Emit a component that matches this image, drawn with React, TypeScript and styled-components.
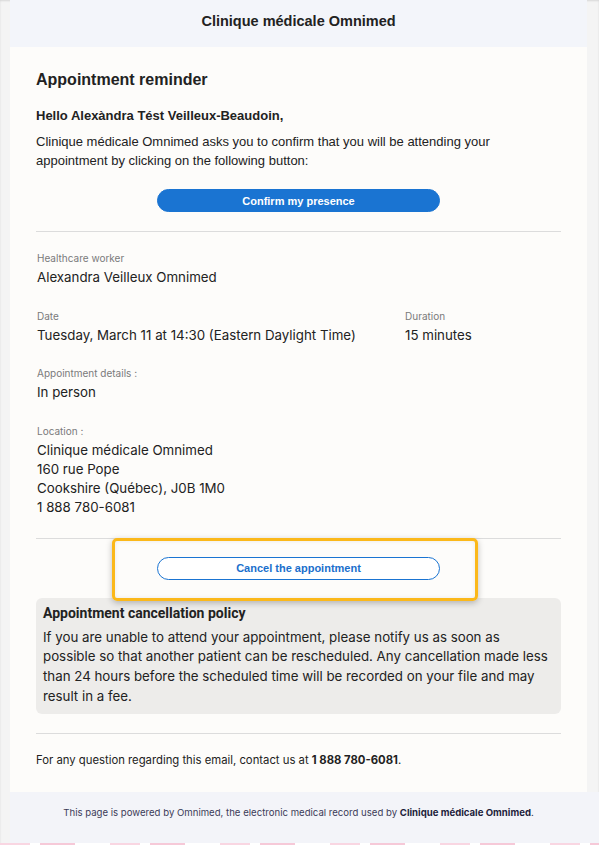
import React from "react";
import styled, { createGlobalStyle } from "styled-components";

const Global = createGlobalStyle`
  html, body { margin: 0; padding: 0; background: #f4f4f4; }
  body { font-family: "Liberation Sans", Arial, sans-serif; color: #222; }
  * { box-sizing: border-box; }
`;

const Page = styled.div`
  width: 599px;
  height: 845px;
  overflow: hidden;
  display: flex;
  flex-direction: column;
  background: #f4f4f4;
  box-shadow: inset 0 1px 2px rgba(0,0,0,0.12);
`;

const Header = styled.div`
  margin: 0 12px 0 10px;
  height: 47px;
  flex: none;
  background: #f3f5fa;
  display: flex;
  align-items: center;
  justify-content: center;
  padding-bottom: 5px;
  font-family: "Liberation Sans", Arial, sans-serif;
  font-weight: 700;
  font-size: 14.5px;
  color: #222;
`;

const Card = styled.div`
  margin: 0 12px 0 10px;
  flex: none;
  background: #fdfcfa;
  padding: 23px 26px 25px 26px;
  display: flex;
  flex-direction: column;
`;

const Title = styled.h1`
  margin: 0 0 16px 0;
  font-family: "Liberation Sans", Arial, sans-serif;
  font-size: 16px;
  font-weight: 700;
  color: #222;
  line-height: 20px;
`;

const Greeting = styled.p`
  margin: 0 0 7px 0;
  font-family: "Liberation Sans", Arial, sans-serif;
  font-weight: 700;
  font-size: 13px;
  line-height: 19px;
  color: #222;
`;

const Para = styled.p`
  margin: 0 0 19px 0;
  font-family: "Liberation Sans", Arial, sans-serif;
  font-size: 13px;
  line-height: 19px;
  color: #222;
  padding-right: 60px;
`;

const ButtonRow = styled.div<{ $pad?: string }>`
  position: relative;
  display: flex;
  justify-content: center;
  padding: ${(p) => p.$pad || "0"};
`;

const PillButton = styled.button<{ $outline?: boolean }>`
  width: 283px;
  height: 23px;
  border-radius: 12px;
  border: 1px solid #1a74d2;
  background: ${(p) => (p.$outline ? "#ffffff" : "#1a74d2")};
  color: ${(p) => (p.$outline ? "#1a6fcc" : "#ffffff")};
  font-family: "Liberation Sans", Arial, sans-serif;
  font-weight: 700;
  font-size: 11px;
  cursor: pointer;
  padding: 0;
`;

const Highlight = styled.div`
  position: absolute;
  left: 76px;
  top: -1px;
  width: 366px;
  height: 63px;
  border: 3px solid #fbb81a;
  border-radius: 5px;
  box-shadow: 0 2px 6px rgba(0,0,0,0.25), inset 0 0 4px rgba(0,0,0,0.08);
  pointer-events: none;
  z-index: 1;
`;

const Divider = styled.hr<{ $m?: string }>`
  margin: ${(p) => p.$m || "0"};
  border: none;
  border-top: 1px solid #dcdcdc;
  height: 0;
`;

const Details = styled.div`
  display: flex;
  flex-direction: column;
  gap: 21.5px;
  padding-top: 19px;
  padding-left: 1px;
  font-family: Inter, "Noto Sans", sans-serif;
`;

const Row = styled.div`
  display: flex;
`;

const Field = styled.div<{ $w?: string }>`
  display: flex;
  flex-direction: column;
  width: ${(p) => p.$w || "auto"};
`;

const Label = styled.div`
  font-size: 10px;
  line-height: 14px;
  color: #7a7a7a;
  margin-bottom: 3px;
`;

const Value = styled.div`
  font-size: 13.3px;
  line-height: 19px;
  color: #222;
`;

const Policy = styled.div`
  background: #edecea;
  border-radius: 6px;
  padding: 5px 12px 7px 7px;
`;

const PolicyTitle = styled.div`
  font-family: Roboto, "Liberation Sans", sans-serif;
  font-weight: 700;
  font-size: 14px;
  line-height: 20px;
  color: #222;
  margin-bottom: 5px;
`;

const PolicyText = styled.div`
  font-family: Inter, "Noto Sans", sans-serif;
  font-size: 13.3px;
  line-height: 19.8px;
  color: #222;
`;

const Contact = styled.div`
  font-family: Inter, "Noto Sans", sans-serif;
  font-size: 11.3px;
  line-height: 14px;
  color: #222;
  b { font-weight: 700; }
`;

const Footer = styled.div`
  margin: 0 0 0 10px;
  height: 51px;
  flex: none;
  background: #f3f4f9;
  display: flex;
  justify-content: center;
  padding: 14px 12px 0 0;
  font-family: Inter, "Noto Sans", sans-serif;
  font-size: 9.6px;
  line-height: 14px;
  color: #3b3b58;
  b { color: #1e1e3c; font-weight: 700; }
`;

const Strip = styled.div`
  flex: 1;
  background: repeating-linear-gradient(90deg, #f9d6e2 0 30px, #fff 30px 40px, #f6c9d8 40px 75px, #fff 75px 110px);
`;

export default function App() {
  return (
    <>
      <Global />
      <Page>
        <Header>Clinique médicale Omnimed</Header>
        <Card>
          <Title>Appointment reminder</Title>
          <Greeting>Hello Alexàndra Tést Veilleux-Beaudoin,</Greeting>
          <Para>
            Clinique médicale Omnimed asks you to confirm that you will be attending your appointment by clicking on the following button:
          </Para>
          <ButtonRow>
            <PillButton>Confirm my presence</PillButton>
          </ButtonRow>
          <Divider $m="19px 0 0 0" />
          <Details>
            <Field>
              <Label>Healthcare worker</Label>
              <Value>Alexandra Veilleux Omnimed</Value>
            </Field>
            <Row>
              <Field $w="368px">
                <Label>Date</Label>
                <Value>Tuesday, March 11 at 14:30 (Eastern Daylight Time)</Value>
              </Field>
              <Field>
                <Label>Duration</Label>
                <Value>15 minutes</Value>
              </Field>
            </Row>
            <Field>
              <Label>Appointment details :</Label>
              <Value>In person</Value>
            </Field>
            <Field>
              <Label>Location :</Label>
              <Value>
                Clinique médicale Omnimed
                <br />160 rue Pope
                <br />Cookshire (Québec), J0B 1M0
                <br />1 888 780-6081
              </Value>
            </Field>
          </Details>
          <Divider $m="21px 0 0 0" />
          <ButtonRow $pad="18px 0 18px 0">
            <PillButton $outline>Cancel the appointment</PillButton>
            <Highlight />
          </ButtonRow>
          <Policy>
            <PolicyTitle>Appointment cancellation policy</PolicyTitle>
            <PolicyText>
              If you are unable to attend your appointment, please notify us as soon as possible so that another patient can be rescheduled. Any cancellation made less than 24 hours before the scheduled time will be recorded on your file and may result in a fee.
            </PolicyText>
          </Policy>
          <Divider $m="19px 0 19px 0" />
          <Contact>
            For any question regarding this email, contact us at <b>1 888 780-6081</b>.
          </Contact>
        </Card>
        <Footer>
          <span>
            This page is powered by Omnimed, the electronic medical record used by <b>Clinique médicale Omnimed</b>.
          </span>
        </Footer>
        <Strip />
      </Page>
    </>
  );
}
